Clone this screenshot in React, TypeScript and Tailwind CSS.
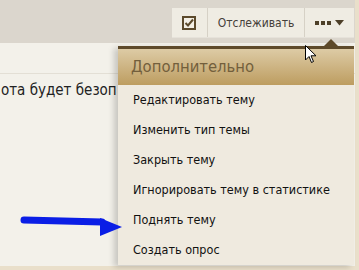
const items = [
  "Редактировать тему",
  "Изменить тип темы",
  "Закрыть тему",
  "Игнорировать тему в статистике",
  "Поднять тему",
  "Создать опрос",
];

const App = () => {
  return (
    <div className="relative w-[359px] h-[270px] overflow-hidden bg-[#e9dfca] font-['DejaVu_Sans_Condensed','DejaVu_Sans',sans-serif]">
      <div className="flex flex-col w-[355px]">
        {/* top bar with buttons */}
        <div className="h-[43px] bg-[#dbd6cd] flex justify-end items-start pt-[8px] pr-[1px]">
          <div className="flex h-[29px] bg-[#efece3] shadow-[0_1px_0_#e6e2da]">
            <div className="w-[36px] flex items-center justify-center border-r border-[#d6d1c6]">
              <svg width="15" height="14" viewBox="0 0 15 14">
                <rect x="1" y="1" width="12" height="12" fill="#f4f0e6" stroke="#5c4a2c" strokeWidth="2" />
                <path d="M3.5 7 L6 9.5 L11 3.5" fill="none" stroke="#5c4a2c" strokeWidth="2" />
              </svg>
            </div>
            <div className="w-[97px] flex items-center justify-center border-r border-[#d6d1c6] text-[12px] text-[#45403a]">
              Отслеживать
            </div>
            <div className="w-[49px] flex items-center justify-center gap-[4px]">
              <svg width="16" height="4" viewBox="0 0 16 4">
                <rect x="0" y="0" width="4" height="4" fill="#4d3f28" />
                <rect x="6" y="0" width="4" height="4" fill="#4d3f28" />
                <rect x="12" y="0" width="4" height="4" fill="#4d3f28" />
              </svg>
              <svg width="9" height="6" viewBox="0 0 9 6">
                <path d="M0 0 H9 L4.5 5.5 Z" fill="#4d3f28" />
              </svg>
            </div>
          </div>
        </div>

        {/* page content */}
        <div className="h-[223px] bg-[#f3f1ea]">
          <div className="h-[31px] border-b border-[#e3dfd5]" />
          <p className="w-[117px] overflow-hidden pt-[5px] pl-[1px] text-[15px] text-[#222] whitespace-nowrap">ота будет безопасной</p>
        </div>
      </div>

      {/* dropdown menu */}
      <div className="absolute left-[118px] top-[46px] w-[236px] shadow-[-4px_2px_6px_rgba(0,0,0,0.18)]">
        <div className="absolute right-[16px] -top-[7px] w-0 h-0 border-l-[7px] border-r-[7px] border-b-[7px] border-l-transparent border-r-transparent border-b-[#5e4a2a]" />
        <div className="h-[39px] border-t-[3px] border-[#5e4a2a] bg-gradient-to-b from-[#ddcba5] to-[#bd9d60] flex items-center pl-[13px] text-[16.5px] text-[#735f3c]">
          Дополнительно
        </div>
        <ul className="bg-[#efeadf]">
          {items.map((t) => (
            <li key={t} className="h-[30px] flex items-center pl-[15px] text-[12.5px] text-[#111]">
              {t}
            </li>
          ))}
        </ul>
      </div>

      {/* blue arrow */}
      <svg className="absolute left-[18px] top-[212px]" width="106" height="26" viewBox="0 0 106 26">
        <path d="M6 8 L84 10" stroke="#0a1ee6" strokeWidth="7" strokeLinecap="round" fill="none" />
        <path d="M82 6 L104 15 L82 24 Z" fill="#0a1ee6" />
      </svg>

      {/* mouse cursor */}
      <svg className="absolute left-[305px] top-[45px]" width="12" height="19" viewBox="0 0 12 19">
        <path d="M0.5 0.5 L0.5 15 L4 11.5 L6.5 17.5 L8.5 16.5 L6 10.8 L11 10.8 Z" fill="#fff" stroke="#000" strokeWidth="1" />
      </svg>
    </div>
  );
};

export default App;
